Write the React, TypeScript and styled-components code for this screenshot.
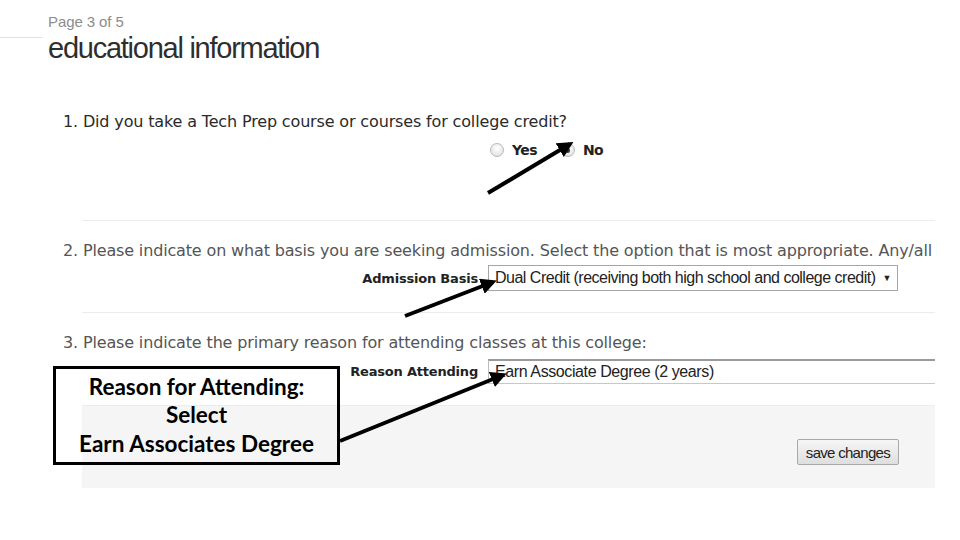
import { createGlobalStyle, styled } from "styled-components";

const GlobalStyle = createGlobalStyle`
  html, body {
    margin: 0;
    padding: 0;
    background: #ffffff;
  }
`;

const Screen = styled.div`
  position: relative;
  width: 960px;
  height: 540px;
  overflow: hidden;
  background: #ffffff;
  padding-top: 13px;
  box-sizing: border-box;
`;

const Header = styled.div`
  display: flex;
  align-items: flex-start;
`;

const HeaderRule = styled.div`
  width: 43px;
  height: 1px;
  margin-top: 24px;
  background: #e2e2e2;
`;

const TitleBlock = styled.div`
  margin-left: 5px;
  font-family: "Liberation Sans", Arial, sans-serif;
`;

const PageNo = styled.div`
  font-size: 15px;
  line-height: 17px;
  color: #8c8c8c;
  letter-spacing: -0.1px;
`;

const Title = styled.h1`
  margin: 2px 0 0;
  font-size: 29px;
  line-height: 32px;
  font-weight: normal;
  color: #2e2e2e;
  letter-spacing: -1.25px;
`;

const Form = styled.div`
  margin-left: 63px;
  width: 872px;
  margin-top: 48px;
  overflow: hidden;
`;

const Question = styled.div<{ $dark?: boolean; $top?: number }>`
  margin-top: ${(p) => p.$top ?? 0}px;
  font-family: "DejaVu Sans", Verdana, sans-serif;
  font-size: 16px;
  line-height: 20px;
  white-space: nowrap;
  color: ${(p) => (p.$dark ? "#2a2a2a" : "#555555")};
  letter-spacing: -0.15px;
`;

const FieldRow = styled.div<{ $top: number }>`
  display: flex;
  align-items: center;
  gap: 10px;
  margin-top: ${(p) => p.$top}px;
`;

const Label = styled.div`
  width: 415px;
  flex: none;
  text-align: right;
  font-family: "DejaVu Sans", Verdana, sans-serif;
  font-weight: bold;
  font-size: 13px;
  color: #222;
  letter-spacing: -0.2px;
`;

const Radios = styled.div`
  display: flex;
  align-items: center;
  padding-left: 2px;
`;

const RadioOption = styled.label`
  display: flex;
  align-items: center;
  gap: 8px;
  margin-right: 24px;
  font-family: "DejaVu Sans", Verdana, sans-serif;
  font-weight: bold;
  font-size: 14px;
  color: #222;
  letter-spacing: -0.6px;
`;

const RadioDot = styled.span<{ $checked?: boolean }>`
  width: 12px;
  height: 12px;
  border-radius: 50%;
  border: 1px solid #b9b9b9;
  background: radial-gradient(circle at 50% 35%, #ffffff 0%, #e6e6e6 70%, #d2d2d2 100%);
  display: flex;
  align-items: center;
  justify-content: center;

  &::after {
    content: "";
    display: ${(p) => (p.$checked ? "block" : "none")};
    width: 5px;
    height: 5px;
    border-radius: 50%;
    background: #3a3a3a;
  }
`;

const Separator = styled.div<{ $top: number }>`
  margin-left: 19px;
  margin-top: ${(p) => p.$top}px;
  height: 1px;
  background: #ececec;
`;

const SelectBox = styled.div`
  height: 24px;
  border: 1px solid #a6a6a6;
  display: flex;
  align-items: center;
  gap: 7px;
  padding: 0 6px;
  font-family: "Liberation Sans", Arial, sans-serif;
  font-size: 16px;
  color: #222;
  letter-spacing: -0.5px;
  white-space: nowrap;
  background: #fff;
`;

const Caret = styled.span`
  font-size: 9px;
  color: #222;
`;

const TextInput = styled.div`
  flex: 1;
  height: 22px;
  border-top: 2px solid #9a9a9a;
  border-left: 1px solid #bdbdbd;
  border-bottom: 1px solid #c8c8c8;
  display: flex;
  align-items: center;
  padding-left: 6px;
  font-family: "Liberation Sans", Arial, sans-serif;
  font-size: 16px;
  color: #222;
  letter-spacing: -0.4px;
  white-space: nowrap;
`;

const Footer = styled.div`
  margin-left: 19px;
  margin-top: 21px;
  height: 83px;
  background: #f5f5f5;
  border-top: 1px solid #ededed;
  display: flex;
  justify-content: flex-end;
  align-items: flex-start;
  padding: 33px 36px 0 0;
  box-sizing: border-box;
`;

const SaveButton = styled.button`
  height: 26px;
  padding: 0 8px;
  border: 1px solid #a9a9a9;
  border-radius: 2px;
  background: linear-gradient(#f6f6f6, #dedede);
  font-family: "Liberation Sans", Arial, sans-serif;
  font-size: 15px;
  color: #222;
  letter-spacing: -0.7px;
`;

const Callout = styled.div`
  position: absolute;
  left: 53px;
  top: 366px;
  width: 287px;
  height: 99px;
  box-sizing: border-box;
  border: 3px solid #000;
  display: flex;
  flex-direction: column;
  justify-content: center;
  align-items: center;
  font-family: Lato, "Open Sans", sans-serif;
  font-weight: bold;
  font-size: 22.5px;
  line-height: 28.5px;
  color: #000;
  text-align: center;
  white-space: nowrap;
`;

const Overlay = styled.svg`
  position: absolute;
  left: 0;
  top: 0;
  width: 960px;
  height: 540px;
  pointer-events: none;
`;

const arrows = [
  { x1: 488, y1: 193, x2: 570, y2: 144 },
  { x1: 405, y1: 316, x2: 493, y2: 282 },
  { x1: 340, y1: 441, x2: 503, y2: 375 },
];

export default function App() {
  return (
    <Screen>
      <GlobalStyle />
      <Header>
        <HeaderRule />
        <TitleBlock>
          <PageNo>Page 3 of 5</PageNo>
          <Title>educational information</Title>
        </TitleBlock>
      </Header>

      <Form>
        <Question $dark>1. Did you take a Tech Prep course or courses for college credit?</Question>
        <FieldRow $top={10}>
          <Label />
          <Radios>
            <RadioOption>
              <RadioDot />
              Yes
            </RadioOption>
            <RadioOption>
              <RadioDot $checked />
              No
            </RadioOption>
          </Radios>
        </FieldRow>
        <Separator $top={62} />

        <Question $top={20}>
          2. Please indicate on what basis you are seeking admission. Select the option that is most appropriate. Any/all c
        </Question>
        <FieldRow $top={4}>
          <Label>Admission Basis</Label>
          <SelectBox>
            Dual Credit (receiving both high school and college credit)
            <Caret>▼</Caret>
          </SelectBox>
        </FieldRow>
        <Separator $top={21} />

        <Question $top={20}>
          3. Please indicate the primary reason for attending classes at this college:
        </Question>
        <FieldRow $top={6}>
          <Label>Reason Attending</Label>
          <TextInput>Earn Associate Degree (2 years)</TextInput>
        </FieldRow>

        <Footer>
          <SaveButton>save changes</SaveButton>
        </Footer>
      </Form>

      <Callout>
        <div>Reason for Attending:</div>
        <div>Select</div>
        <div>Earn Associates Degree</div>
      </Callout>

      <Overlay viewBox="0 0 960 540">
        <defs>
          <marker id="head" markerWidth="4" markerHeight="4" refX="3" refY="2" orient="auto">
            <path d="M0,0 L4,2 L0,4 Z" fill="#000" />
          </marker>
        </defs>
        {arrows.map((a, i) => (
          <line
            key={i}
            x1={a.x1}
            y1={a.y1}
            x2={a.x2}
            y2={a.y2}
            stroke="#000"
            strokeWidth={4}
            markerEnd="url(#head)"
          />
        ))}
      </Overlay>
    </Screen>
  );
}
